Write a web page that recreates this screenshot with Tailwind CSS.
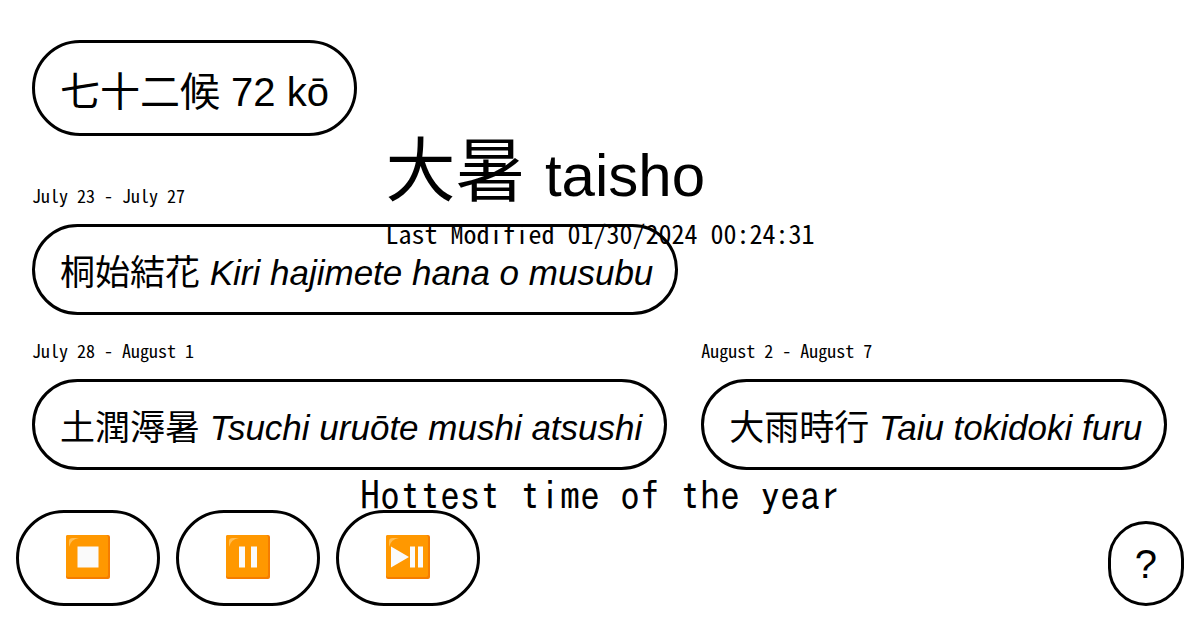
<!DOCTYPE html>
<html lang="en">
<head>
<meta charset="utf-8">
<meta name="viewport" content="width=device-width, initial-scale=1">
<title>七十二候 72 kō</title>
<script src="https://cdn.jsdelivr.net/npm/@tailwindcss/browser@4"></script>
</head>
<body class="relative min-h-screen bg-white font-['Liberation_Sans','Noto_Sans_CJK_JP',sans-serif] text-black">

<main class="flex flex-col items-start px-8 pt-10">
  <h1><a href="#" class="block rounded-full border-3 border-black px-[25px] pt-[19px] pb-[11px] text-[40px] leading-[60px]">七十二候 72 kō</a></h1>
  <ul class="mt-[47px] flex flex-wrap gap-x-[34px] gap-y-[23px] whitespace-nowrap">
    <li class="flex w-full flex-col items-start gap-[17px]">
      <time class="font-['Noto_Sans_Mono_CJK_JP','Noto_Sans_CJK_JP',monospace] text-[18px] leading-6">July 23 - July 27</time>
      <a href="#" class="block rounded-full border-3 border-black pt-[18px] pr-[22px] pb-[12px] pl-[25px] text-[35px] leading-[55px]">桐始結花 <i>Kiri hajimete hana o musubu</i></a>
    </li>
    <li class="flex flex-col items-start gap-[17px]">
      <time class="font-['Noto_Sans_Mono_CJK_JP','Noto_Sans_CJK_JP',monospace] text-[18px] leading-6">July 28 - August 1</time>
      <a href="#" class="block rounded-full border-3 border-black pt-[18px] pr-[22px] pb-[12px] pl-[25px] text-[35px] leading-[55px]">土潤溽暑 <i>Tsuchi uruōte mushi atsushi</i></a>
    </li>
    <li class="flex flex-col items-start gap-[17px]">
      <time class="font-['Noto_Sans_Mono_CJK_JP','Noto_Sans_CJK_JP',monospace] text-[18px] leading-6">August 2 - August 7</time>
      <a href="#" class="block rounded-full border-3 border-black pt-[18px] pr-[22px] pb-[12px] pl-[25px] text-[35px] leading-[55px]">大雨時行 <i>Taiu tokidoki furu</i></a>
    </li>
  </ul>
</main>

<header class="pointer-events-none absolute inset-x-0 top-[131px] flex justify-center whitespace-nowrap">
  <div>
    <h2 class="text-[70px] leading-[83px]">大暑 <span class="text-[60px]">taisho</span></h2>
    <p class="font-['Noto_Sans_Mono_CJK_JP','Noto_Sans_CJK_JP',monospace] text-[26px] leading-8">Last Modified 01/30/2024 00:24:31</p>
  </div>
</header>
<p class="pointer-events-none absolute inset-x-0 top-[470px] text-center font-['IPAGothic','Noto_Sans_Mono_CJK_JP',monospace] text-[40px] leading-[50px]">Hottest time of the year</p>

<footer class="absolute inset-x-4 bottom-6 flex items-end justify-between">
  <div class="flex gap-4">
    <button type="button" aria-label="Stop" class="flex h-24 w-36 items-center justify-center rounded-full border-3 border-black">
      <svg class="mb-0.5 h-12 w-12" viewBox="0 0 48 48" aria-hidden="true"><rect x="2" y="2" width="44" height="44" rx="2" fill="#f57c00"/><rect x="2" y="2" width="42" height="42" rx="2" fill="#ff9800"/><path d="M5 14V8q0-3 4-3h6q-8 1-10 9z" fill="#ffbd52"/><path d="M13.500 13.500h21v21h-21z" fill="#fafafa"/></svg>
    </button>
    <button type="button" aria-label="Pause" class="flex h-24 w-36 items-center justify-center rounded-full border-3 border-black">
      <svg class="mb-0.5 h-12 w-12" viewBox="0 0 48 48" aria-hidden="true"><rect x="2" y="2" width="44" height="44" rx="2" fill="#f57c00"/><rect x="2" y="2" width="42" height="42" rx="2" fill="#ff9800"/><path d="M5 14V8q0-3 4-3h6q-8 1-10 9z" fill="#ffbd52"/><path d="M15 13.500h6v21h-6zM27 13.500h6v21h-6z" fill="#fafafa"/></svg>
    </button>
    <button type="button" aria-label="Play or pause" class="flex h-24 w-36 items-center justify-center rounded-full border-3 border-black">
      <svg class="mb-0.5 h-12 w-12" viewBox="0 0 48 48" aria-hidden="true"><rect x="2" y="2" width="44" height="44" rx="2" fill="#f57c00"/><rect x="2" y="2" width="42" height="42" rx="2" fill="#ff9800"/><path d="M5 14V8q0-3 4-3h6q-8 1-10 9z" fill="#ffbd52"/><path d="M7 13.500L25 24 7 34.500zM26 13.500h5v21h-5zM34 13.500h5v21h-5z" fill="#fafafa"/></svg>
    </button>
  </div>
  <button type="button" class="rounded-full border-3 border-black px-6 pt-[17px] pb-[15px] text-[40px] leading-[47px]">?</button>
</footer>
</body>
</html>
